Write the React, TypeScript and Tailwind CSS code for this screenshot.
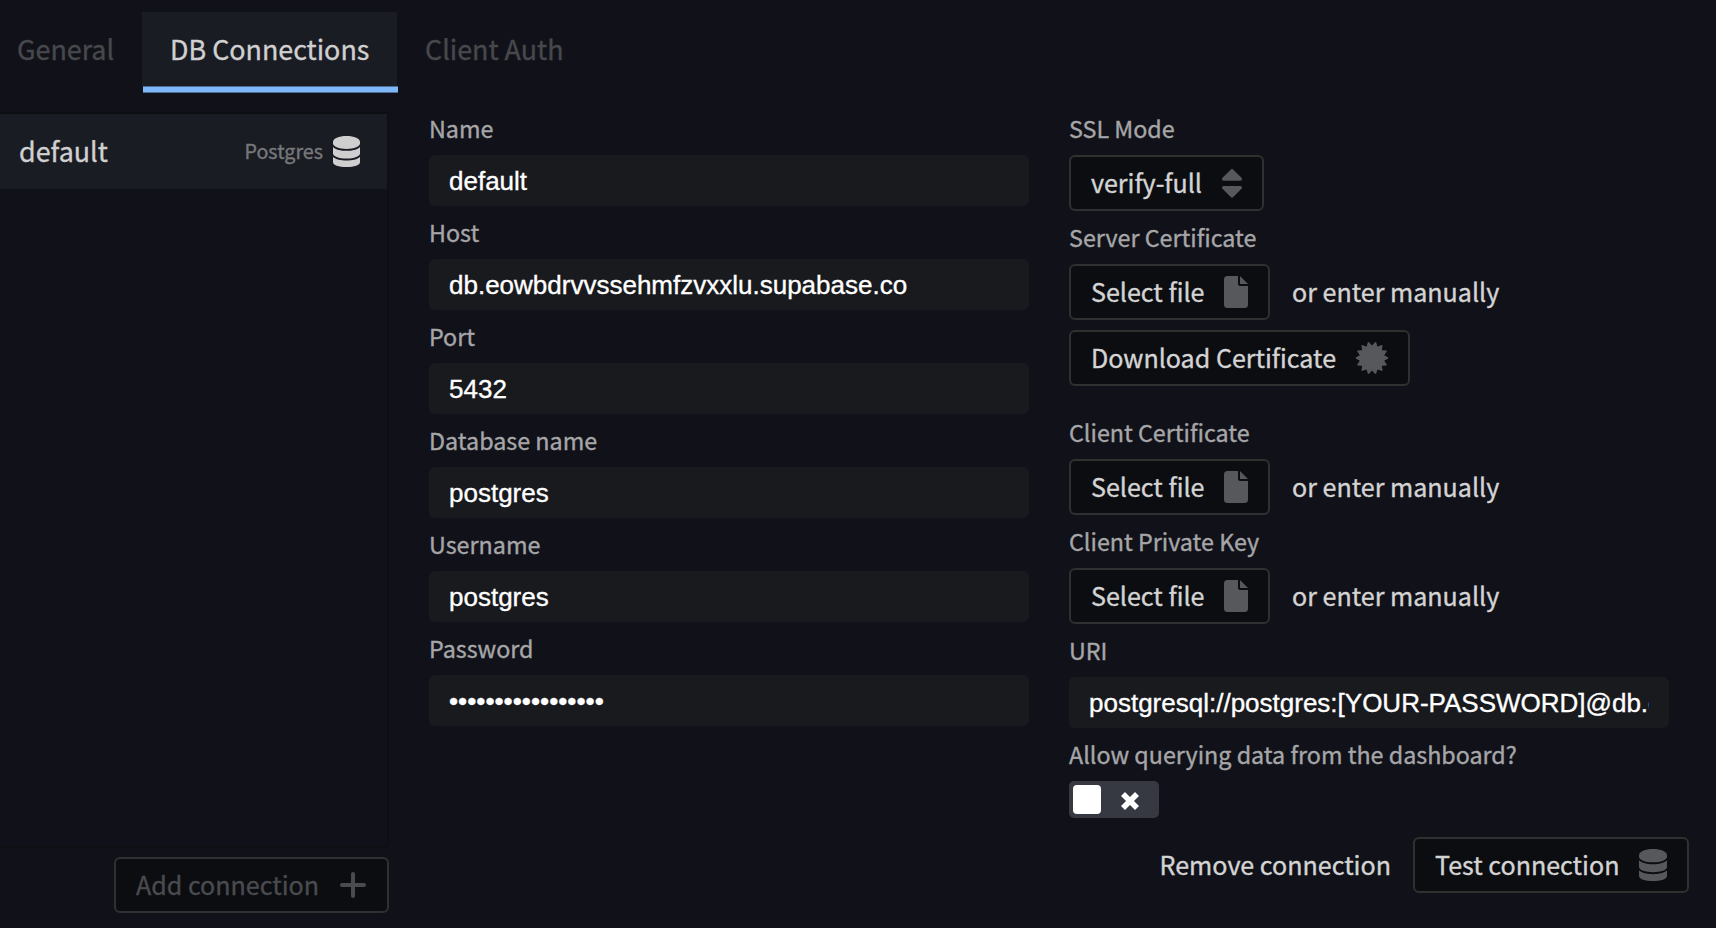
import React from "react";

const label =
  "h-[31px] text-[23.3px] leading-[33px] whitespace-nowrap text-[#a6a6a8] [-webkit-text-stroke:0.35px]";

function DatabaseIcon({ className }: { className: string }) {
  return (
    <svg viewBox="0 0 28 32" preserveAspectRatio="none" fill="currentColor" className={className}>
      <path d="M0 6.300C0 2.500 6 0 14 0s14 2.500 14 6.300v1.200c0 3.500-6 5.800-14 5.800S0 11 0 7.500z" />
      <path d="M0 11.300c2.800 2.700 8 4 14 4s11.200-1.300 14-4V18c0 3-6 5.200-14 5.200S0 21 0 18z" />
      <path d="M0 21.600c2.800 2.500 8 3.600 14 3.600s11.200-1.100 14-3.600V27c0 3-6 5-14 5S0 30 0 27z" />
    </svg>
  );
}

function FileIcon() {
  return (
    <svg viewBox="0 0 24 32" fill="currentColor" className="h-8 w-6 text-[#57585b]">
      <path d="M3.500 0H14v8a2 2 0 0 0 2 2h8v18.500a3.500 3.500 0 0 1-3.500 3.500h-17A3.500 3.500 0 0 1 0 28.500v-25A3.500 3.500 0 0 1 3.500 0z" />
      <path d="M16 0l8 8h-8z" />
    </svg>
  );
}

function SortIcon() {
  return (
    <svg viewBox="0 0 20 32" fill="currentColor" className="h-8 w-5 text-[#57585b]">
      <path d="M11 2.400l8.500 8.400c1 1.100.4 2.900-1.200 2.900H1.700C.1 13.700-.5 11.900.5 10.800L9 2.400c.6-.6 1.400-.6 2 0z" />
      <path d="M11 30.200l8.500-8.400c1-1.100.4-2.900-1.200-2.900H1.700c-1.600 0-2.200 1.800-1.200 2.900L9 30.200c.6.6 1.400.6 2 0z" />
    </svg>
  );
}

const burst = Array.from({ length: 28 }, (_, i) => {
  const r = i % 2 === 0 ? 15.4 : 11.2;
  const a = (i * Math.PI) / 14;
  return `${(16 + r * Math.cos(a)).toFixed(2)},${(16 + r * Math.sin(a)).toFixed(2)}`;
}).join(" ");

function CertificateIcon() {
  return (
    <svg viewBox="0 0 32 32" className="h-8 w-8 overflow-visible text-[#57585b]">
      <polygon points={burst} fill="currentColor" stroke="currentColor" strokeWidth="1.8" strokeLinejoin="round" />
    </svg>
  );
}

function PlusIcon() {
  return (
    <svg viewBox="0 0 28 32" stroke="currentColor" strokeWidth="4" strokeLinecap="round" className="h-8 w-7">
      <path d="M14 5v22M3 16h22" />
    </svg>
  );
}

function CrossIcon() {
  return (
    <svg
      viewBox="0 0 18 18"
      stroke="currentColor"
      strokeWidth="5.600"
      className="mt-[3px] ml-5 h-[18px] w-[18px] overflow-visible text-white"
    >
      <path d="M2 2l14 14M16 2L2 16" />
    </svg>
  );
}

function Button({
  text,
  size,
  muted = false,
  children,
}: {
  text: string;
  size: string;
  muted?: boolean;
  children: React.ReactNode;
}) {
  return (
    <button
      className={
        "flex h-14 shrink-0 items-center justify-between rounded-[6px] border-2 border-[#303030] bg-[#0c0d11] px-5 text-[25.07px] leading-[40px] whitespace-nowrap [-webkit-text-stroke:0.35px] " +
        (muted ? "text-[#4a4b4f] " : "text-[#d4d4d4] ") +
        size
      }
    >
      <span className="-mt-0.5">{text}</span>
      {children}
    </button>
  );
}

function Field({ name, value, password = false }: { name: string; value: string; password?: boolean }) {
  return (
    <label className="flex h-[104px] w-[600px] shrink-0 flex-col">
      <span className={label}>{name}</span>
      <input
        type={password ? "password" : "text"}
        defaultValue={value}
        className="mt-3 h-[51px] w-full rounded-[6px] bg-[#191a1e] px-5 pt-0.5 font-['Liberation_Sans',Arial,sans-serif] text-[26px] text-white outline-none [-webkit-text-stroke:0.35px]"
      />
    </label>
  );
}

function FileField({ name }: { name: string }) {
  return (
    <div className="flex h-[109px] shrink-0 flex-col">
      <span className={label}>{name}</span>
      <div className="mt-3 flex h-14 items-center">
        <Button text="Select file" size="w-[201px]">
          <FileIcon />
        </Button>
        <span className="-mt-0.5 ml-[22px] text-[25.07px] leading-[40px] text-[#d4d4d4] [-webkit-text-stroke:0.35px]">
          or enter manually
        </span>
      </div>
    </div>
  );
}

export default function App() {
  return (
    <div className="flex h-[928px] w-[1716px] flex-col overflow-hidden bg-[#111219] font-['Noto_Sans_CJK_SC',sans-serif]">
      <nav className="flex h-28 shrink-0 pt-3 text-[26.86px] leading-[74px] whitespace-nowrap text-[#47484c] [-webkit-text-stroke:0.35px]">
        <span className="w-[142px] pl-[17px]">General</span>
        <div className="flex h-[81px] w-[255px] flex-col">
          <span className="h-[74px] bg-[#1a1c23] pl-7 text-[#d0d0d0]">DB Connections</span>
          <span className="-mr-px ml-px h-[7px] border-y border-[#4d6d93] bg-[#7fb8f8]" />
        </div>
        <span className="pl-7">Client Auth</span>
      </nav>
      <main className="flex h-[816px]">
        <aside className="flex w-[389px] shrink-0 flex-col items-end">
          <div className="h-[736px] w-full border-t-2 border-r-2 border-b-2 border-[#0e0f13]">
            <div className="flex h-[75px] items-center bg-[#1a1c23] pr-[27px] pl-[19px] [-webkit-text-stroke:0.35px]">
              <span className="text-[26.86px] text-[#d0d0d0]">default</span>
              <span className="-mt-0.5 ml-auto text-[19.7px] text-[#77787b]">Postgres</span>
              <DatabaseIcon className="ml-[10px] h-[31px] w-[27px] text-[#cfcfcf]" />
            </div>
          </div>
          <div className="mt-[9px]">
            <Button text="Add connection" size="w-[275px]" muted>
              <PlusIcon />
            </Button>
          </div>
        </aside>
        <section className="ml-10 w-[640px] shrink-0">
          <Field name="Name" value="default" />
          <Field name="Host" value="db.eowbdrvvssehmfzvxxlu.supabase.co" />
          <Field name="Port" value="5432" />
          <Field name="Database name" value="postgres" />
          <Field name="Username" value="postgres" />
          <Field name="Password" value="abcdefghijklmnopq" password />
        </section>
        <section className="flex w-[620px] shrink-0 flex-col">
          <div className="flex h-[109px] shrink-0 flex-col items-start gap-3">
            <span className={label}>SSL Mode</span>
            <Button text="verify-full" size="w-[195px]">
              <SortIcon />
            </Button>
          </div>
          <FileField name="Server Certificate" />
          <div className="mb-[30px]">
            <Button text="Download Certificate" size="w-[341px]">
              <CertificateIcon />
            </Button>
          </div>
          <FileField name="Client Certificate" />
          <FileField name="Client Private Key" />
          <Field name="URI" value="postgresql://postgres:[YOUR-PASSWORD]@db.eowbdrvvssehmfzvxxlu.supabase.co:5432/postgres" />
          <span className={label}>Allow querying data from the dashboard?</span>
          <div className="mt-3 flex h-[37px] w-[90px] shrink-0 items-center rounded-[5px] bg-[#373942] pl-1">
            <span className="h-[29px] w-7 rounded-[4px] bg-white" />
            <CrossIcon />
          </div>
          <div className="mt-[19px] flex items-center justify-end">
            <span className="-mt-0.5 mr-[22px] text-[25.07px] leading-[40px] text-[#d4d4d4] [-webkit-text-stroke:0.35px]">
              Remove connection
            </span>
            <Button text="Test connection" size="w-[276px]">
              <DatabaseIcon className="h-8 w-7 text-[#57585b]" />
            </Button>
          </div>
        </section>
      </main>
    </div>
  );
}
